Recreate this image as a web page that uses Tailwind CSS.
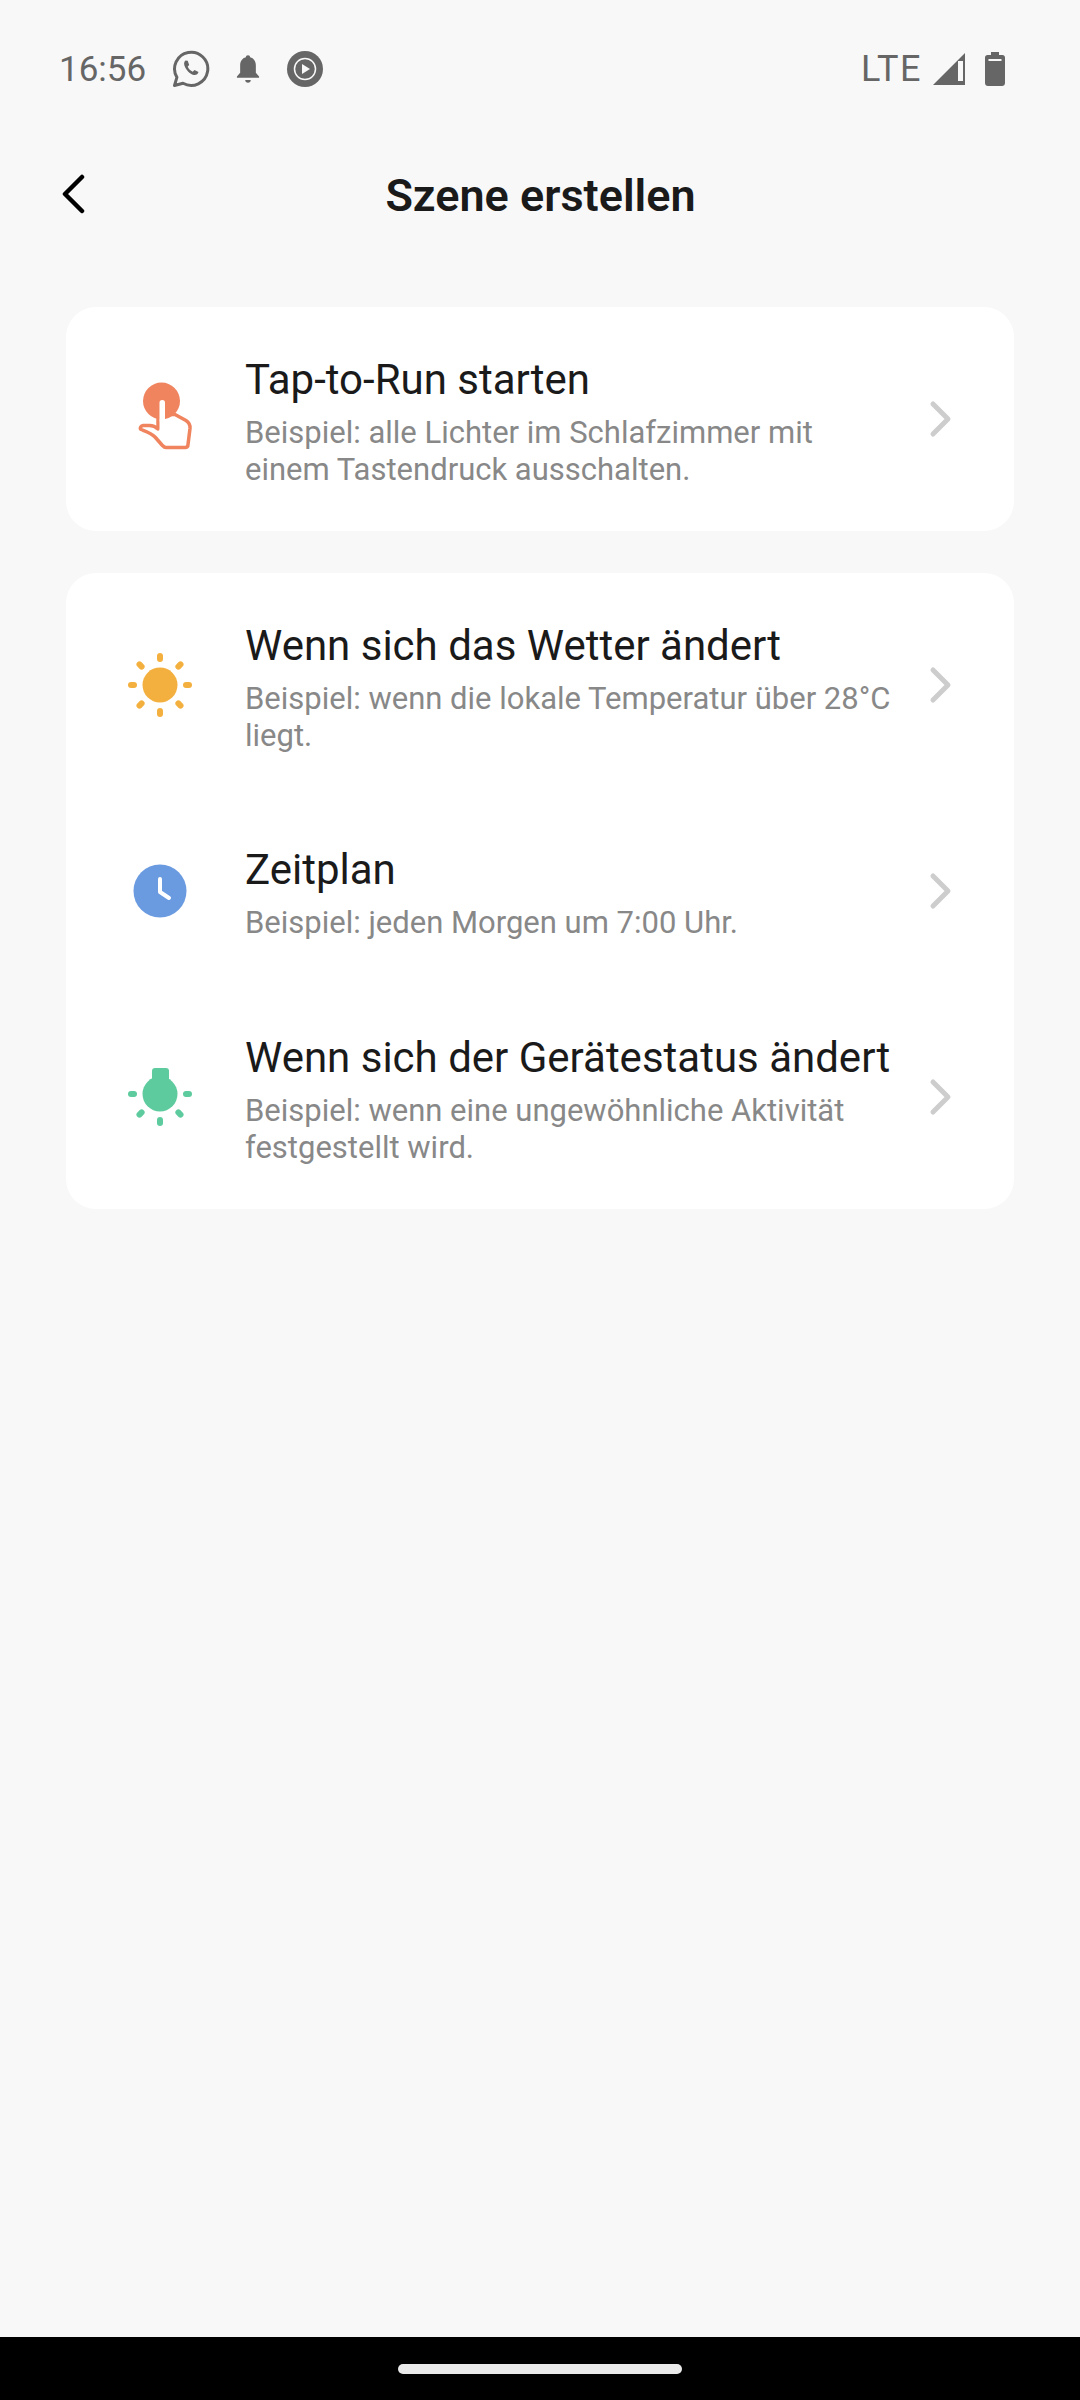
<!DOCTYPE html>
<html lang="de">

<head>
  <meta charset="UTF-8" />
  <meta name="viewport" content="width=device-width, initial-scale=1.0" />
  <title>Szene erstellen</title>
  <script src="https://cdn.jsdelivr.net/npm/@tailwindcss/browser@4"></script>
</head>

<body class="h-[2400px] w-[1080px] flex flex-col bg-[#f8f8f8] font-['Roboto',sans-serif] overflow-hidden">

  <!-- Status bar -->
  <div class="h-[138px] shrink-0 flex items-center pl-[59px] pr-[75px] text-[#666666]">
    <span class="text-[35px] leading-none w-[113px]">16:56</span>
    <svg class="w-[38px] h-[38px]" viewBox="0 0 38 38" fill="none">
      <path d="M2.500 35.500l2.400-8.200A16.600 16.600 0 1 1 11 33.300z" stroke="#666666" stroke-width="3" stroke-linejoin="round" />
      <path d="M13.500 10.500c-1.800 1.500-2 4 0 7.500 2 3.600 5.500 6.500 8.500 7 2.300.3 4-1 4.500-3l-4-2-1.800 1.800c-2-.8-4.200-3-5-5.200l1.500-1.600-1.500-4.200z" fill="#666666" />
    </svg>
    <svg class="w-[24px] h-[30px] ml-[26px]" viewBox="0 0 26 32" fill="#666666">
      <path d="M13 1c1.500 0 2.300 1 2.300 2.300 4 1 6.200 4.500 6.200 8.700v8l3.500 4v1.500H1V24l3.500-4v-8c0-4.200 2.200-7.700 6.200-8.700C10.700 2 11.500 1 13 1z" />
      <path d="M10 28h6c0 1.800-1.300 3-3 3s-3-1.200-3-3z" />
    </svg>
    <div class="ml-[27px] w-[36px] h-[36px] rounded-full bg-[#666666] flex items-center justify-center">
      <svg class="w-[36px] h-[36px]" viewBox="0 0 36 36" fill="none">
        <circle cx="18" cy="18" r="10.500" stroke="#f8f8f8" stroke-width="1.500" />
        <path d="M15 13l8 5-8 5z" fill="#f8f8f8" />
      </svg>
    </div>
    <span class="ml-auto text-[36px] leading-none tracking-[1.5px]">LTE</span>
    <svg class="w-[33px] h-[33px] ml-[11px]" viewBox="0 0 33 33">
      <path d="M32 0v32H0z" fill="#666666" />
      <path d="M25 8h5v20h-5z" fill="#f8f8f8" />
    </svg>
    <svg class="w-[20px] h-[34px] ml-[19px]" viewBox="0 0 20 34" fill="#666666">
      <path d="M6 0h8v3h3.500c1.400 0 2.500 1.100 2.500 2.500V31c0 1.700-1.300 3-3 3H3c-1.700 0-3-1.300-3-3V5.500C0 4.100 1.100 3 2.500 3H6z" />
      <path d="M3.500 7h13v2h-13z" fill="#f8f8f8" />
    </svg>
  </div>

  <!-- Header -->
  <div class="relative h-[114px] shrink-0 flex items-center justify-center">
    <svg class="absolute left-[60px] top-[36px] w-[26px] h-[40px]" viewBox="0 0 26 40" fill="none">
      <path d="M22 3L5 20l17 17" stroke="#000000" stroke-width="4.500" stroke-linecap="round" stroke-linejoin="round" />
    </svg>
    <h1 class="text-[45px] leading-none font-semibold text-[#1a1a1a] ml-[1px]">Szene erstellen</h1>
  </div>

  <!-- Main content -->
  <main class="flex-1 flex flex-col gap-[42px] pt-[55px] px-[66px]">

    <section class="bg-white rounded-[30px]">
      <div class="h-[224px] flex items-center">
        <div class="w-[179px] shrink-0 pl-[54px]">
          <svg class="w-[80px] h-[80px]" viewBox="0 0 80 80" fill="none">
            <path d="M38 50c-3-3-6-4-10-3.500h-5c-2 0-3.500 3-2 4 5 2 10 3.500 14 7.500l7 8c1 1 2 2.500 4 2.500h19c2 0 3-1 3-3l2-16c.3-3-1-6-4-8l-11-6H45z" stroke="#f0845f" stroke-width="3.500" stroke-linejoin="round" fill="#ffffff" />
            <path d="M38 36v14" stroke="#f0845f" stroke-width="3.500" />
            <circle cx="41.500" cy="22" r="18.500" fill="#f0845f" />
            <rect x="39.500" y="21" width="5.500" height="34" rx="2.700" fill="#ffffff" />
          </svg>
        </div>
        <div class="flex-1 pr-[26px] pt-[6px]">
          <div class="text-[42px] leading-[46px] text-[#1a1a1a]">Tap-to-Run starten</div>
          <div class="text-[31px] leading-[37px] text-[#888888] mt-[11px]">Beispiel: alle Lichter im Schlafzimmer mit<br />einem Tastendruck ausschalten.</div>
        </div>
        <svg class="w-[24px] h-[40px] mr-[62px] shrink-0" viewBox="0 0 24 40" fill="none">
          <path d="M5 5l15 15L5 35" stroke="#cdcdcd" stroke-width="5" stroke-linecap="round" stroke-linejoin="round" />
        </svg>
      </div>
    </section>

    <section class="bg-white rounded-[30px]">
      <!-- Wetter -->
      <div class="h-[224px] flex items-center">
        <div class="w-[179px] shrink-0 pl-[54px]">
          <svg class="w-[80px] h-[80px]" viewBox="0 0 80 80" fill="#f4b03e">
            <circle cx="40" cy="40" r="17.500" />
            <rect x="37" y="8" width="6" height="9" rx="3" />
            <rect x="37" y="63" width="6" height="9" rx="3" />
            <rect x="8" y="37" width="9" height="6" rx="3" />
            <rect x="63" y="37" width="9" height="6" rx="3" />
            <rect x="37" y="14.500" width="6" height="9" rx="3" transform="rotate(45 40 40) translate(0 -6.500)" />
            <rect x="37" y="14.500" width="6" height="9" rx="3" transform="rotate(135 40 40) translate(0 -6.500)" />
            <rect x="37" y="14.500" width="6" height="9" rx="3" transform="rotate(225 40 40) translate(0 -6.500)" />
            <rect x="37" y="14.500" width="6" height="9" rx="3" transform="rotate(315 40 40) translate(0 -6.500)" />
          </svg>
        </div>
        <div class="flex-1 pr-[26px] pt-[6px]">
          <div class="text-[42px] leading-[46px] text-[#1a1a1a]">Wenn sich das Wetter ändert</div>
          <div class="text-[31px] leading-[37px] text-[#888888] mt-[11px]">Beispiel: wenn die lokale Temperatur über 28°C<br />liegt.</div>
        </div>
        <svg class="w-[24px] h-[40px] mr-[62px] shrink-0" viewBox="0 0 24 40" fill="none">
          <path d="M5 5l15 15L5 35" stroke="#cdcdcd" stroke-width="5" stroke-linecap="round" stroke-linejoin="round" />
        </svg>
      </div>
      <!-- Zeitplan -->
      <div class="h-[188px] flex items-center">
        <div class="w-[179px] shrink-0 pl-[54px]">
          <svg class="w-[80px] h-[80px]" viewBox="0 0 80 80" fill="none">
            <circle cx="40" cy="40" r="26.500" fill="#6a9ae0" />
            <path d="M40 28v13l9 6" stroke="#ffffff" stroke-width="4" stroke-linecap="round" stroke-linejoin="round" />
          </svg>
        </div>
        <div class="flex-1 pr-[26px] pt-[6px]">
          <div class="text-[42px] leading-[46px] text-[#1a1a1a]">Zeitplan</div>
          <div class="text-[31px] leading-[37px] text-[#888888] mt-[11px]">Beispiel: jeden Morgen um 7:00 Uhr.</div>
        </div>
        <svg class="w-[24px] h-[40px] mr-[62px] shrink-0" viewBox="0 0 24 40" fill="none">
          <path d="M5 5l15 15L5 35" stroke="#cdcdcd" stroke-width="5" stroke-linecap="round" stroke-linejoin="round" />
        </svg>
      </div>
      <!-- Geraetestatus -->
      <div class="h-[224px] flex items-center">
        <div class="w-[179px] shrink-0 pl-[54px]">
          <svg class="w-[80px] h-[80px]" viewBox="0 0 80 80" fill="#5ecb9e">
            <circle cx="40" cy="37" r="17.500" />
            <rect x="32" y="11" width="17" height="16" rx="3" />
            <rect x="8" y="34" width="9" height="6" rx="3" />
            <rect x="63" y="34" width="9" height="6" rx="3" />
            <rect x="37" y="60" width="6" height="9" rx="3" />
            <rect x="37" y="14.500" width="6" height="9" rx="3" transform="translate(0 -3) rotate(135 40 40) translate(0 -6.500)" />
            <rect x="37" y="14.500" width="6" height="9" rx="3" transform="translate(0 -3) rotate(225 40 40) translate(0 -6.500)" />
          </svg>
        </div>
        <div class="flex-1 pr-[26px] pt-[6px]">
          <div class="text-[42px] leading-[46px] text-[#1a1a1a]">Wenn sich der Gerätestatus ändert</div>
          <div class="text-[31px] leading-[37px] text-[#888888] mt-[11px]">Beispiel: wenn eine ungewöhnliche Aktivität<br />festgestellt wird.</div>
        </div>
        <svg class="w-[24px] h-[40px] mr-[62px] shrink-0" viewBox="0 0 24 40" fill="none">
          <path d="M5 5l15 15L5 35" stroke="#cdcdcd" stroke-width="5" stroke-linecap="round" stroke-linejoin="round" />
        </svg>
      </div>
    </section>
  </main>

  <!-- Navigation bar -->
  <div class="h-[63px] shrink-0 bg-black flex items-center justify-center">
    <div class="w-[284px] h-[10px] rounded-full bg-[#eaeaea]"></div>
  </div>
</body>

</html>
